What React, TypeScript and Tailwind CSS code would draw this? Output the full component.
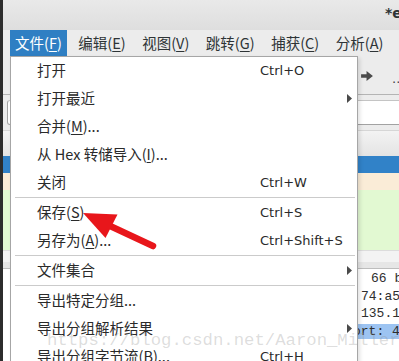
import React from "react";

function U({ c }: { c: string }) {
  return <span className="underline decoration-1 underline-offset-[2px]">{c}</span>;
}

type Item =
  | { kind: "sep" }
  | { kind: "item"; label: React.ReactNode; sc?: string; sub?: boolean };

const items: Item[] = [
  { kind: "item", label: <>打开</>, sc: "Ctrl+O" },
  { kind: "item", label: <>打开最近</>, sub: true },
  { kind: "item", label: <>合并(<U c="M" />)...</> },
  { kind: "item", label: <>从 Hex 转储导入(<U c="I" />)...</> },
  { kind: "item", label: <>关闭</>, sc: "Ctrl+W" },
  { kind: "sep" },
  { kind: "item", label: <>保存(<U c="S" />)</>, sc: "Ctrl+S" },
  { kind: "item", label: <>另存为(<U c="A" />)...</>, sc: "Ctrl+Shift+S" },
  { kind: "sep" },
  { kind: "item", label: <>文件集合</>, sub: true },
  { kind: "sep" },
  { kind: "item", label: <>导出特定分组...</> },
  { kind: "item", label: <>导出分组解析结果</>, sub: true },
  { kind: "item", label: <>导出分组字节流(<U c="B" />)...</>, sc: "Ctrl+H" },
];

const menus: [string, string][] = [
  ["文件", "F"],
  ["编辑", "E"],
  ["视图", "V"],
  ["跳转", "G"],
  ["捕获", "C"],
  ["分析", "A"],
];

export default function App() {
  return (
    <div className="relative flex h-[361px] w-[399px] overflow-hidden bg-white font-['Noto_Sans_CJK_SC','Noto_Sans',sans-serif] text-[#2e3436]">
      {/* window frame left edge */}
      <div className="w-[3px] shrink-0 bg-[#2c2c2c]" />

      {/* background window */}
      <div className="flex min-w-0 flex-1 flex-col">
        {/* title bar */}
        <div className="flex h-[30px] shrink-0 items-center bg-gradient-to-b from-[#e9e9e9] to-[#dedede] pb-[4px] pl-[382px]">
          <span className="whitespace-nowrap font-['DejaVu_Sans',sans-serif] text-[14px] font-bold leading-none text-[#2e3436]">
            *ens33
          </span>
        </div>

        {/* menubar */}
        <div className="flex h-[27px] shrink-0 items-stretch gap-[6.5px] bg-[#ececec] pl-[7px]">
          {menus.map(([t, k], i) => (
            <div
              key={t}
              className={
                "flex shrink-0 items-center whitespace-nowrap px-[5px] text-[14.5px] leading-none " +
                (i === 0 ? "bg-[#2f7fc3] text-white" : "text-[#2e3436]")
              }
            >
              {t}(<U c={k} />)
            </div>
          ))}
        </div>

        {/* toolbar */}
        <div className="flex h-[38px] shrink-0 items-center border-b border-[#b4b4b4] bg-[#ececec] pl-[358px]">
          <svg width="12" height="10" viewBox="0 0 13 11" className="shrink-0">
            <path d="M0 3.5 H6 V0 L13 5.5 L6 11 V7.5 H0 Z" fill="#4b4b4b" />
          </svg>
          <span className="ml-[19px] mt-[6px] font-['DejaVu_Sans',sans-serif] text-[13px] leading-none text-[#444]">
            ...
          </span>
        </div>

        {/* display filter bar */}
        <div className="flex h-[36px] shrink-0 flex-col border-b border-[#d6d6d6] bg-[#ececec] pl-[4px] pt-[5px]">
          <div className="-mr-[10px] h-[25px] rounded-[3px] border border-[#a2a2a2] border-t-[#c4c4c4] bg-white" />
        </div>

        {/* packet list */}
        <div className="h-[25px] shrink-0 bg-gradient-to-b from-[#f3f3f3] to-[#e4e4e4]" />
        <div className="flex h-[94px] shrink-0 flex-col overflow-hidden">
          <div className="h-[17px] shrink-0 bg-[#3182c8]" />
          <div className="h-[17px] shrink-0 bg-[#faecd7]" />
          <div className="h-[17px] shrink-0 bg-[#e2f9d2]" />
          <div className="h-[17px] shrink-0 bg-[#e2f9d2]" />
          <div className="h-[17px] shrink-0 bg-[#e2f9d2]" />
          <div className="h-[17px] shrink-0 bg-[#e2f9d2]" />
        </div>
        <div className="h-[12px] shrink-0 border-t border-[#dcdcdc] bg-[#f3f3f3]" />
        <div className="h-[7px] shrink-0 border-b border-[#bdbdbd] bg-[#e6e6e6]" />

        {/* packet details */}
        <div className="flex flex-col whitespace-nowrap pt-[1px] font-['Liberation_Mono',monospace] text-[13px] leading-[17.5px] text-[#2e2e2e]">
          <div className="pl-[368px]">66 bytes on wire (528 bits)</div>
          <div className="pl-[358px]">74:a5:28:1c:9b:02</div>
          <div className="pl-[358px]">135.181.27.4</div>
          <div className="pl-[311px]">
            <span className="bg-[#9dc4f2] pr-[40px]">Src Port: 443</span>
          </div>
        </div>
      </div>

      {/* file menu dropdown */}
      <div className="absolute left-[10px] top-[56px] w-[348px] border border-[#a6a6a6] bg-white shadow-[2px_2px_4px_rgba(0,0,0,0.12)]">
        {items.map((it, i) =>
          it.kind === "sep" ? (
            <div key={i} className="flex h-[2px] items-start">
              <div className="ml-[4px] mr-[2px] h-px flex-1 bg-[#cbcbcb]" />
            </div>
          ) : (
            <div key={i} className="flex h-[28px] items-center pb-[1px] pl-[26px] pr-[5px]">
              <span className="w-[223px] shrink-0 whitespace-nowrap text-[14.5px] leading-none text-[#2a2a2a]">
                {it.label}
              </span>
              <span className="flex-1 whitespace-nowrap font-['DejaVu_Sans',sans-serif] text-[13px] leading-none text-[#2a2a2a]">
                {it.sc ?? ""}
              </span>
              <span className="flex w-[5px] shrink-0 justify-end">
                {it.sub ? (
                  <svg width="5" height="9" viewBox="0 0 5 9">
                    <path d="M0 0 L5 4.5 L0 9 Z" fill="#4a4a4a" />
                  </svg>
                ) : null}
              </span>
            </div>
          )
        )}
      </div>

      {/* watermark */}
      <div className="pointer-events-none absolute left-[47px] top-[332px] whitespace-nowrap font-['Liberation_Mono',monospace] text-[17.3px] leading-none text-[rgba(150,150,150,0.32)]">
        https://blog.csdn.net/Aaron_Miller
      </div>

      {/* red annotation arrow */}
      <svg
        className="pointer-events-none absolute left-0 top-0"
        width="399"
        height="361"
        viewBox="0 0 399 361"
      >
        <line x1="153" y1="246" x2="108" y2="225" stroke="#e8161b" strokeWidth="6.5" strokeLinecap="round" />
        <polygon points="83,213 117.5,214.5 105.5,238" fill="#e8161b" />
      </svg>
    </div>
  );
}
